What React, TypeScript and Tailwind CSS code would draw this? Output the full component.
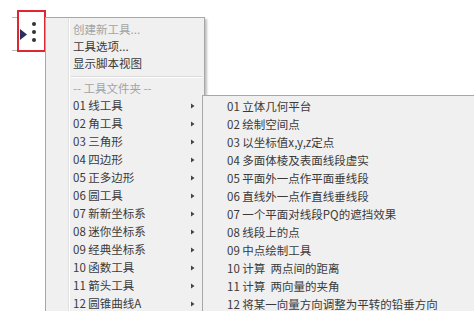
import React from "react";

const font = { fontFamily: '"Noto Sans CJK SC", "Noto Sans", sans-serif' };

const folders = [
  "01 线工具",
  "02 角工具",
  "03 三角形",
  "04 四边形",
  "05 正多边形",
  "06 圆工具",
  "07 新新坐标系",
  "08 迷你坐标系",
  "09 经典坐标系",
  "10 函数工具",
  "11 箭头工具",
  "12 圆锥曲线A",
];

const subs = [
  "01 立体几何平台",
  "02 绘制空间点",
  "03 以坐标值x,y,z定点",
  "04 多面体棱及表面线段虚实",
  "05 平面外一点作平面垂线段",
  "06 直线外一点作直线垂线段",
  "07 一个平面对线段PQ的遮挡效果",
  "08 线段上的点",
  "09 中点绘制工具",
  "10 计算  两点间的距离",
  "11 计算  两向量的夹角",
  "12 将某一向量方向调整为平转的铅垂方向",
];

function Arrow() {
  return (
    <svg width="4" height="6" viewBox="0 0 4 6" className="shrink-0">
      <path d="M0 0.5 L3.5 3 L0 5.5 Z" fill="#444" />
    </svg>
  );
}

export default function App() {
  return (
    <div
      className="relative w-[474px] h-[311px] overflow-hidden bg-white text-[11.5px] text-[#3a3a3a]"
      style={font}
    >
      {/* toolbar strip */}
      <div className="pt-[10px] pl-[12px] flex items-start">
        <div className="flex flex-col justify-between h-[42px] w-[5px] pt-[7px] pb-[1px]">
          <div className="h-px bg-[#b8b8b8]" />
          <div className="h-px bg-[#b8b8b8]" />
        </div>
        <div className="w-[29px] h-[42px] border-2 border-[#e0262e] flex items-center pl-[1px] pt-[6px]">
          <svg width="7" height="11" viewBox="0 0 7 11">
            <path d="M0 0 L7 5.5 L0 11 Z" fill="#2d2d5e" />
          </svg>
          <div className="ml-[5px] flex flex-col gap-[4px] -mt-[4px]">
            <div className="w-[4px] h-[4px] rounded-full bg-[#333]" />
            <div className="w-[4px] h-[4px] rounded-full bg-[#333]" />
            <div className="w-[4px] h-[4px] rounded-full bg-[#333]" />
          </div>
        </div>
      </div>

      {/* main menu */}
      <div className="absolute left-[45px] top-[17px] w-[160px] h-[320px] border border-[#a7a7a7] bg-[#f0f0f0] shadow-[2px_2px_2px_rgba(0,0,0,0.25)]">
        <div className="absolute left-[22px] top-0 bottom-0 w-px bg-[#e0e0e0]" />
        <div className="absolute left-[23px] top-0 bottom-0 w-px bg-white" />
        <div className="relative pt-[3px]">
          <div className="h-[17px] flex items-center pl-[27px] text-[#a3a3a3]">创建新工具...</div>
          <div className="h-[17px] flex items-center pl-[27px]">工具选项...</div>
          <div className="h-[17px] flex items-center pl-[27px]">显示脚本视图</div>
          <div className="h-[8px] pt-[4px] pl-[25px] pr-[2px]">
            <div className="h-px bg-[#dadada]" />
            <div className="h-px bg-white" />
          </div>
          <div className="h-[17px] flex items-center pl-[27px] text-[#a3a3a3]">-- 工具文件夹 --</div>
          {folders.map((f) => (
            <div key={f} className="h-[18px] flex items-center pl-[27px] pr-[9px] justify-between">
              <span>{f}</span>
              <Arrow />
            </div>
          ))}
        </div>
      </div>

      {/* submenu */}
      <div className="absolute left-[202px] top-[95px] w-[290px] h-[240px] border border-[#a7a7a7] bg-[#f0f0f0]">
        <div className="pt-[2px]">
          {subs.map((s) => (
            <div key={s} className="h-[18px] flex items-center pl-[24px] whitespace-pre">
              {s}
            </div>
          ))}
        </div>
      </div>
    </div>
  );
}
